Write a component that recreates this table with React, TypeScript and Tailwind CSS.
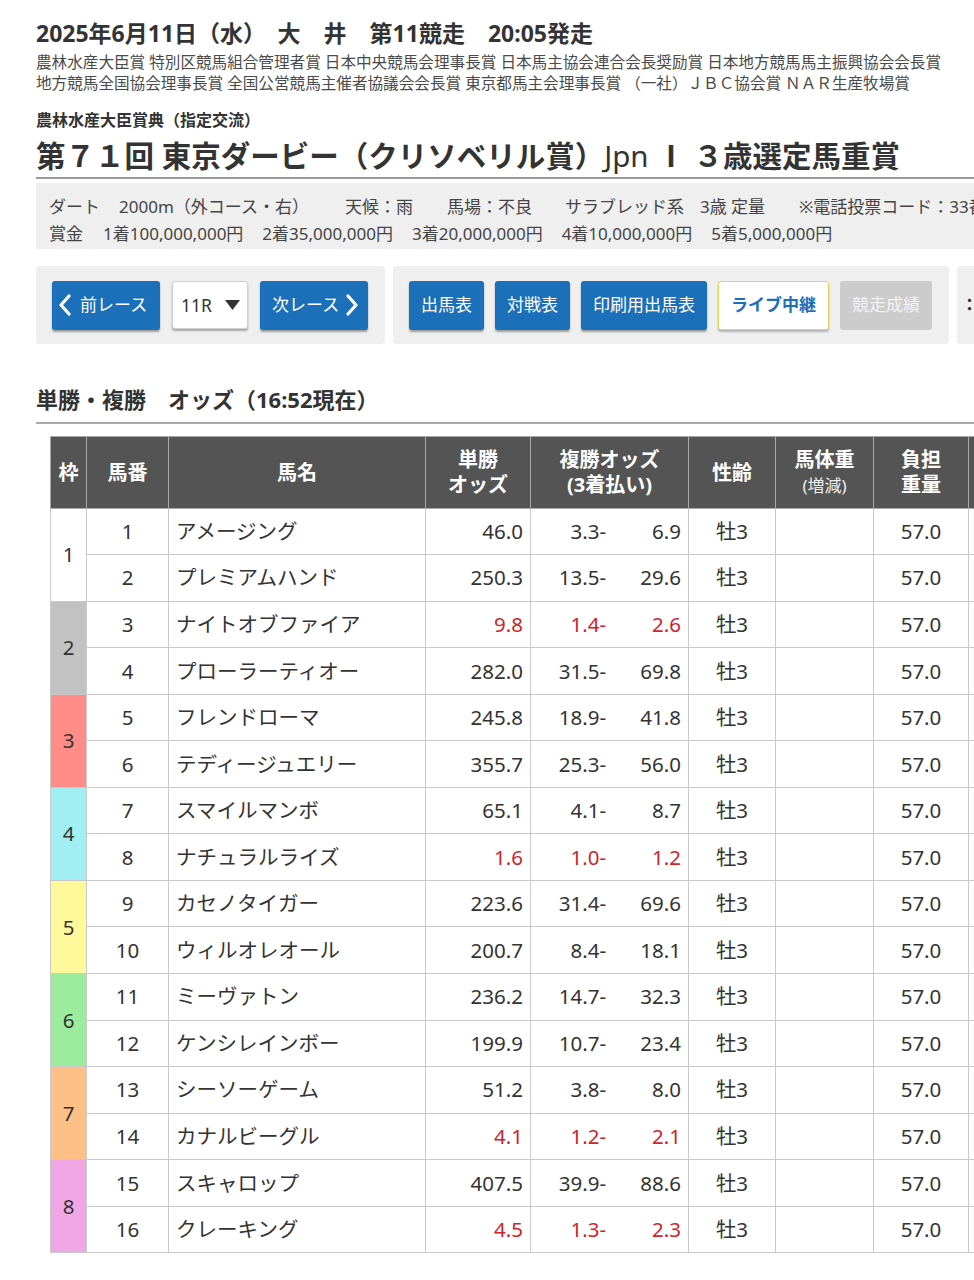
import React from "react";

type Row = [number, string, string, string, string, boolean];

const rows: Row[] = [
  [1, "アメージング", "46.0", "3.3-", "6.9", false],
  [2, "プレミアムハンド", "250.3", "13.5-", "29.6", false],
  [3, "ナイトオブファイア", "9.8", "1.4-", "2.6", true],
  [4, "プローラーティオー", "282.0", "31.5-", "69.8", false],
  [5, "フレンドローマ", "245.8", "18.9-", "41.8", false],
  [6, "テディージュエリー", "355.7", "25.3-", "56.0", false],
  [7, "スマイルマンボ", "65.1", "4.1-", "8.7", false],
  [8, "ナチュラルライズ", "1.6", "1.0-", "1.2", true],
  [9, "カセノタイガー", "223.6", "31.4-", "69.6", false],
  [10, "ウィルオレオール", "200.7", "8.4-", "18.1", false],
  [11, "ミーヴァトン", "236.2", "14.7-", "32.3", false],
  [12, "ケンシレインボー", "199.9", "10.7-", "23.4", false],
  [13, "シーソーゲーム", "51.2", "3.8-", "8.0", false],
  [14, "カナルビーグル", "4.1", "1.2-", "2.1", true],
  [15, "スキャロップ", "407.5", "39.9-", "88.6", false],
  [16, "クレーキング", "4.5", "1.3-", "2.3", true],
];

const frameBg = [
  "bg-white",
  "bg-[#c2c2c2]",
  "bg-[#ff8c86]",
  "bg-[#a2eff3]",
  "bg-[#fff99c]",
  "bg-[#9cec9e]",
  "bg-[#ffc088]",
  "bg-[#f1a7e5]",
];

function ChevL() {
  return (
    <svg width="14" height="22" viewBox="0 0 14 22" className="shrink-0">
      <polyline points="11,2 3,11 11,20" fill="none" stroke="white" strokeWidth="3.2" strokeLinecap="round" strokeLinejoin="round" />
    </svg>
  );
}
function ChevR() {
  return (
    <svg width="14" height="22" viewBox="0 0 14 22" className="shrink-0">
      <polyline points="3,2 11,11 3,20" fill="none" stroke="white" strokeWidth="3.2" strokeLinecap="round" strokeLinejoin="round" />
    </svg>
  );
}

function BlueBtn({ children, className = "" }: { children: React.ReactNode; className?: string }) {
  return (
    <div
      className={
        "flex h-[49px] items-center rounded-[3px] bg-[#1c6fb9] text-[17px] text-white shadow-[0_2px_2px_rgba(0,0,0,0.35)] " +
        className
      }
    >
      {children}
    </div>
  );
}

const cellB = "border-[1.5px] border-[#c9c9c9]";
const headB = "border-[1.5px] border-[#a8a8a8]";

export default function App() {
  return (
    <div className="w-full overflow-hidden bg-white text-[#333] font-['Noto_Sans','Noto_Sans_CJK_JP',sans-serif]">
      <div className="w-[1140px] pl-[36px] pb-[30px]">
        {/* Date line */}
        <div className="pt-[17px] text-[23px] font-bold leading-[33px] text-[#333]">
          2025年6月11日（水）　大　井　第11競走　20:05発走
        </div>
        <div className="mt-[1.5px] text-[15.6px] leading-[21px] text-[#4a4a4a]">
          <div>農林水産大臣賞 特別区競馬組合管理者賞 日本中央競馬会理事長賞 日本馬主協会連合会長奨励賞 日本地方競馬馬主振興協会会長賞</div>
          <div>地方競馬全国協会理事長賞 全国公営競馬主催者協議会会長賞 東京都馬主会理事長賞 （一社）ＪＢＣ協会賞 ＮＡＲ生産牧場賞</div>
        </div>

        {/* Title */}
        <div className="mt-[14px] text-[16px] font-bold leading-[24px] text-[#333]">農林水産大臣賞典（指定交流）</div>
        <div className="mt-[4px] border-b-[2.5px] border-[#9a9a9a] pb-[1px] text-[29.5px] font-bold leading-[40px] text-[#333]">
          第７１回 東京ダービー（クリソベリル賞）<span className="font-normal">Jpn</span> Ⅰ ３歳選定馬重賞
        </div>

        {/* Info box */}
        <div className="mt-[4px] bg-[#efefef] pl-[13px] pt-[10px] pb-[2px] text-[17px] leading-[27px] text-[#444]">
          <div className="flex whitespace-nowrap">
            <span>ダート</span>
            <span className="ml-[19px]">2000m（外コース・右）</span>
            <span className="ml-[36px]">天候：雨</span>
            <span className="ml-[34px]">馬場：不良</span>
            <span className="ml-[33px]">サラブレッド系</span>
            <span className="ml-[16px]">3歳 定量</span>
            <span className="ml-[34px]">※電話投票コード：33番</span>
          </div>
          <div className="flex whitespace-nowrap">
            <span>賞金</span>
            <span className="ml-[20px]">1着100,000,000円</span>
            <span className="ml-[19px]">2着35,000,000円</span>
            <span className="ml-[19px]">3着20,000,000円</span>
            <span className="ml-[19px]">4着10,000,000円</span>
            <span className="ml-[19px]">5着5,000,000円</span>
          </div>
        </div>

        {/* Button boxes */}
        <div className="mt-[17px] flex gap-[8px]">
          <div className="flex w-[349px] items-center gap-[12px] rounded-[4px] bg-[#efefef] pl-[16px] pt-[15px] pb-[14px]">
            <BlueBtn className="w-[108px] pl-[6px] gap-[8px]">
              <ChevL />
              <span>前レース</span>
            </BlueBtn>
            <div className="flex h-[48px] w-[76px] items-center justify-between rounded-[3px] border border-[#d0d0d0] bg-white pl-[8px] pr-[7px] text-[17.5px] text-[#333] shadow-[0_2px_2px_rgba(0,0,0,0.3)]">
              <span>11R</span>
              <svg width="15" height="10" viewBox="0 0 15 10">
                <polygon points="0,0 15,0 7.5,10" fill="#333" />
              </svg>
            </div>
            <BlueBtn className="w-[108px] pl-[12px] gap-[6px]">
              <span>次レース</span>
              <ChevR />
            </BlueBtn>
          </div>
          <div className="flex w-[556px] items-center gap-[11px] rounded-[4px] bg-[#efefef] pl-[16px] pt-[15px] pb-[14px]">
            <BlueBtn className="px-[12px]">出馬表</BlueBtn>
            <BlueBtn className="px-[12px]">対戦表</BlueBtn>
            <BlueBtn className="px-[12px]">印刷用出馬表</BlueBtn>
            <div className="flex h-[49px] items-center rounded-[3px] border-[1.5px] border-[#e6d45a] bg-white px-[12px] text-[17px] font-bold text-[#1c6fb9] shadow-[0_2px_2px_rgba(0,0,0,0.25)]">
              ライブ中継
            </div>
            <div className="flex h-[49px] items-center rounded-[3px] bg-[#cccccc] px-[12px] text-[17px] text-[#f2f2f2]">
              競走成績
            </div>
          </div>
          <div className="flex w-[120px] items-center rounded-[4px] bg-[#efefef] pl-[4px] text-[17px] font-bold text-[#333]">
            ：
          </div>
        </div>

        {/* Odds heading */}
        <div className="mt-[40px] border-b-[2.5px] border-[#aaaaaa] pb-[8px] text-[22px] font-bold leading-[30px] text-[#333]">
          単勝・複勝　オッズ（16:52現在）
        </div>

        {/* Table */}
        <table className="ml-[14px] mt-[12px] table-fixed border-collapse text-[20.5px] text-[#333]">
          <colgroup>
            <col className="w-[36px]" />
            <col className="w-[82px]" />
            <col className="w-[257px]" />
            <col className="w-[105px]" />
            <col className="w-[158px]" />
            <col className="w-[87px]" />
            <col className="w-[98px]" />
            <col className="w-[95px]" />
            <col className="w-[110px]" />
          </colgroup>
          <thead>
            <tr className="h-[72px] bg-[#545454] text-[20px] font-bold leading-[25px] text-white">
              <th className={headB}>枠</th>
              <th className={headB}>馬番</th>
              <th className={headB}>馬名</th>
              <th className={headB}>
                単勝
                <br />
                オッズ
              </th>
              <th className={headB}>
                複勝オッズ
                <br />
                (3着払い)
              </th>
              <th className={headB}>性齢</th>
              <th className={headB}>
                馬体重
                <br />
                <span className="text-[17px] font-normal text-[#eee]">(増減)</span>
              </th>
              <th className={headB}>
                負担
                <br />
                重量
              </th>
              <th className={headB}>騎手</th>
            </tr>
          </thead>
          <tbody>
            {rows.map((r, i) => {
              const [num, name, win, pl1, pl2, red] = r;
              const oddsColor = red ? "text-[#d0232b]" : "text-[#333]";
              const frame = Math.floor(i / 2);
              return (
                <tr key={num} className="h-[46.55px]">
                  {i % 2 === 0 && (
                    <td rowSpan={2} className={cellB + " text-center " + frameBg[frame]}>
                      {frame + 1}
                    </td>
                  )}
                  <td className={cellB + " text-center"}>{num}</td>
                  <td className={cellB + " pl-[7px] text-left"}>{name}</td>
                  <td className={cellB + " pr-[7px] text-right " + oddsColor}>{win}</td>
                  <td className={cellB + " " + oddsColor}>
                    <div className="flex">
                      <span className="w-[75px] text-right">{pl1}</span>
                      <span className="w-[75px] text-right">{pl2}</span>
                    </div>
                  </td>
                  <td className={cellB + " text-center"}>牡3</td>
                  <td className={cellB}></td>
                  <td className={cellB + " text-center"}>57.0</td>
                  <td className={cellB}></td>
                </tr>
              );
            })}
          </tbody>
        </table>
      </div>
    </div>
  );
}
